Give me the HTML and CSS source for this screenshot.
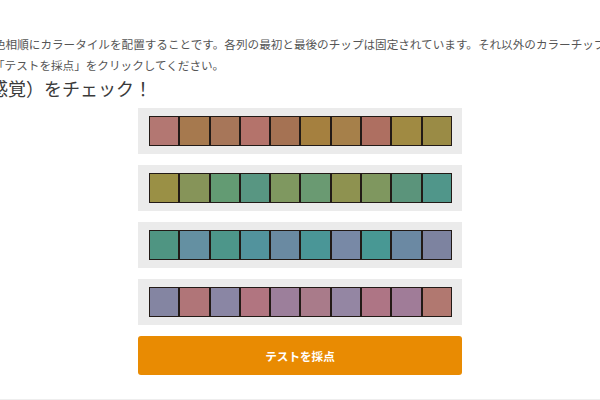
FILE: index.html
```html
<!DOCTYPE html>
<html lang="ja">
<head>
<meta charset="utf-8">
<title>色相テスト</title>
<link rel="stylesheet" href="styles.css">
</head>
<body>
<div class="intro">
  <p class="line line1">色相順にカラータイルを配置することです。各列の最初と最後のチップは固定されています。それ以外のカラーチップをドラッグして並べ替えてください。</p>
  <p class="line line2">「テストを採点」をクリックしてください。</p>
  <h1 class="title">感覚）をチェック！</h1>
</div>
<main class="board">
  <div class="row">
    <div class="tile" style="background:#b37772"></div>
    <div class="tile" style="background:#a6794e"></div>
    <div class="tile" style="background:#a77659"></div>
    <div class="tile" style="background:#b4736b"></div>
    <div class="tile" style="background:#a57253"></div>
    <div class="tile" style="background:#a5803f"></div>
    <div class="tile" style="background:#a6804a"></div>
    <div class="tile" style="background:#ae6f61"></div>
    <div class="tile" style="background:#a08a42"></div>
    <div class="tile" style="background:#9a8b45"></div>
  </div>
  <div class="row">
    <div class="tile" style="background:#9a9045"></div>
    <div class="tile" style="background:#869459"></div>
    <div class="tile" style="background:#639b73"></div>
    <div class="tile" style="background:#589682"></div>
    <div class="tile" style="background:#7f9860"></div>
    <div class="tile" style="background:#6a9a72"></div>
    <div class="tile" style="background:#8e9250"></div>
    <div class="tile" style="background:#7f975f"></div>
    <div class="tile" style="background:#5b947b"></div>
    <div class="tile" style="background:#50968a"></div>
  </div>
  <div class="row">
    <div class="tile" style="background:#4f9582"></div>
    <div class="tile" style="background:#6490a2"></div>
    <div class="tile" style="background:#4d968a"></div>
    <div class="tile" style="background:#52939d"></div>
    <div class="tile" style="background:#6a8aa2"></div>
    <div class="tile" style="background:#4a9697"></div>
    <div class="tile" style="background:#7889a6"></div>
    <div class="tile" style="background:#489894"></div>
    <div class="tile" style="background:#6b89a3"></div>
    <div class="tile" style="background:#7d83a0"></div>
  </div>
  <div class="row">
    <div class="tile" style="background:#8485a2"></div>
    <div class="tile" style="background:#b07578"></div>
    <div class="tile" style="background:#8a86a4"></div>
    <div class="tile" style="background:#b17580"></div>
    <div class="tile" style="background:#9c7f9b"></div>
    <div class="tile" style="background:#a97b8a"></div>
    <div class="tile" style="background:#9486a3"></div>
    <div class="tile" style="background:#ae7585"></div>
    <div class="tile" style="background:#a07c98"></div>
    <div class="tile" style="background:#b17870"></div>
  </div>
  <button class="score">テストを採点</button>
</main>
<footer class="foot"></footer>
</body>
</html>
```
FILE: styles.css
```css
html, body {
  margin: 0;
  padding: 0;
  background: #fff;
  overflow: hidden;
}
body {
  font-family: "Noto Sans CJK JP", "Noto Sans", sans-serif;
  color: #555;
  width: 600px;
  height: 400px;
}
.intro {
  padding-top: 34px;
}
.line {
  margin: 0;
  font-size: 11.6px;
  line-height: 21px;
  white-space: nowrap;
  color: #555;
}
.line1 {
  margin-left: -6px;
}
.line2 {
  margin-left: -7px;
}
.title {
  margin: 0 0 8px -10px;
  font-size: 18px;
  line-height: 24px;
  font-weight: normal;
  color: #3a3a3a;
  white-space: nowrap;
}
.board {
  width: 324px;
  margin: 0 auto;
  display: flex;
  flex-direction: column;
  gap: 11px;
}
.row {
  display: flex;
  background: #ebebeb;
  padding: 8px 10px 8px 11px;
}
.tile {
  flex: 1;
  height: 28px;
  border: 1px solid #221a16;
}
.score {
  height: 39px;
  border: none;
  border-radius: 3px;
  background: #e98b02;
  color: #fff;
  font-family: "Noto Sans CJK JP", "Noto Sans", sans-serif;
  font-size: 11.6px;
  font-weight: bold;
  padding: 0;
}
.foot {
  margin-top: 24px;
  border-top: 1px solid #eeeeee;
}
```
